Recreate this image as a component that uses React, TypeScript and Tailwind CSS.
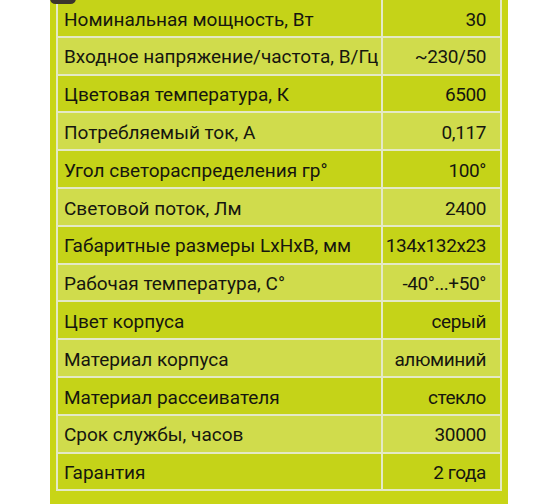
import React from "react";

const rows: [string, string][] = [
  ["Номинальная мощность, Вт", "30"],
  ["Входное напряжение/частота, В/Гц", "~230/50"],
  ["Цветовая температура, К", "6500"],
  ["Потребляемый ток, А", "0,117"],
  ["Угол светораспределения гр°", "100°"],
  ["Световой поток, Лм", "2400"],
  ["Габаритные размеры LxHxB, мм", "134x132x23"],
  ["Рабочая температура, С°", "-40°...+50°"],
  ["Цвет корпуса", "серый"],
  ["Материал корпуса", "алюминий"],
  ["Материал рассеивателя", "стекло"],
  ["Срок службы, часов", "30000"],
  ["Гарантия", "2 года"],
];

export default function App() {
  return (
    <div
      className="w-[560px] h-[504px] bg-white flex overflow-hidden"
      style={{ fontFamily: "Roboto, 'Noto Sans', sans-serif" }}
    >
      <div className="w-[50px] shrink-0 bg-white" />
      <div className="relative w-[458px] shrink-0 bg-[#c8d516] pl-[6px] pr-[6px]">
        <div className="absolute left-0 top-[-7px] w-[26px] h-[11px] rounded-full bg-[#3b352c]" />
        <div className="border-l-2 border-r-2 border-[#e4e9c6]">
          {rows.map(([k, v], i) => (
            <div
              key={i}
              className={`grid grid-cols-[325px_1fr] h-[37.8px] border-b-2 border-[#e4e9c6] ${
                i % 2 === 0 ? "bg-[#c5d318]" : "bg-[#d0dc4c]"
              }`}
            >
              <div className="border-r-2 border-[#e4e9c6] flex items-center pl-[6px] pt-[4px] text-[19px] text-[#16160f] whitespace-nowrap">
                {k}
              </div>
              <div className="flex items-center justify-end pr-[14px] pt-[4px] text-[19px] text-[#16160f] whitespace-nowrap tracking-[-0.4px]">
                {v}
              </div>
            </div>
          ))}
        </div>
      </div>
      <div className="flex-1 bg-white" />
    </div>
  );
}
